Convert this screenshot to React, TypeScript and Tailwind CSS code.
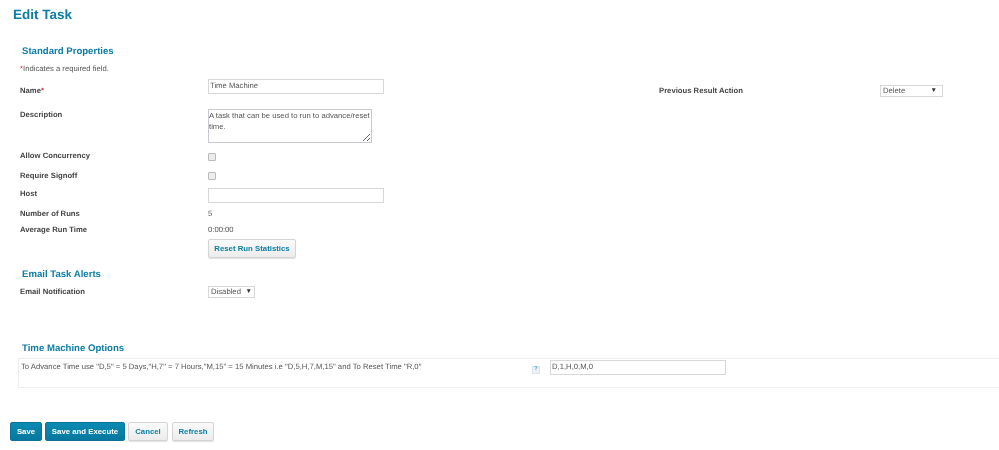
const labelClass = "w-[188px] shrink-0 font-bold text-[#444]";
const headingClass = "ml-[22px] text-[9.6px] leading-[12px] font-bold text-[#0a7ea4]";
const grayButton =
  "h-[19px] rounded-[2px] border border-[#d4d4d4] bg-gradient-to-b from-[#fafafa] to-[#ececec] font-bold text-[#0a7ea4] text-[7.8px] shadow-[0_1px_1px_rgba(0,0,0,0.12)]";
const blueButton =
  "h-[19px] rounded-[2px] border border-[#0a7397] bg-gradient-to-b from-[#0a8bb3] to-[#06789f] font-bold text-white text-[7.8px]";
const checkClass = "h-[8px] w-[8px] appearance-none rounded-[1px] border border-[#bbb] bg-[#ececec]";

function Arrow() {
  return <span className="text-[6.5px] leading-none text-[#333]">▼</span>;
}

export default function App() {
  return (
    <div className="relative h-[450px] w-[999px] overflow-hidden bg-white font-['Liberation_Sans',Arial,sans-serif] text-[7.7px] leading-[10px] text-[#555] [text-rendering:geometricPrecision] [will-change:transform]">
      <h1 className="ml-[13px] pt-[6px] text-[13.5px] leading-[18px] font-bold text-[#0a7ea4]">Edit Task</h1>

      <h2 className={`${headingClass} mt-[22px]`}>Standard Properties</h2>
      <p className="mt-[6px] ml-[20px] text-[#555]">
        <span className="text-[#d9363e]">*</span>Indicates a required field.
      </p>

      <div className="mt-[5px] flex">
        <div className="w-[659px] shrink-0 pl-[20px]">
          <div className="flex h-[30px]">
            <div className={`${labelClass} pt-[7px]`}>
              Name<span className="text-[#d9363e]">*</span>
            </div>
            <div className="h-[15px] w-[176px] border border-[#d8d8d8] pl-[1px] leading-[12px]">Time Machine</div>
          </div>
          <div className="flex h-[41px]">
            <div className={`${labelClass} pt-[1px]`}>Description</div>
            <textarea
              readOnly
              className="h-[34px] w-[164px] resize-y overflow-hidden border border-[#c9c9d6] py-0 pl-0 text-[7.7px] leading-[11px] text-[#555] outline-none"
              value="A task that can be used to run to advance/reset time."
            />
          </div>
          <div className="flex h-[20px] items-start">
            <div className={`${labelClass} pt-[1px]`}>Allow Concurrency</div>
            <input type="checkbox" readOnly className={`${checkClass} mt-[3px]`} />
          </div>
          <div className="flex h-[18px] items-start">
            <div className={`${labelClass} pt-[1px]`}>Require Signoff</div>
            <input type="checkbox" readOnly className={`${checkClass} mt-[2px]`} />
          </div>
          <div className="flex h-[20px]">
            <div className={`${labelClass} pt-[1px]`}>Host</div>
            <div className="h-[15px] w-[176px] border border-[#d8d8d8]" />
          </div>
          <div className="flex h-[16px] pt-[1px]">
            <div className={labelClass}>Number of Runs</div>
            <div>5</div>
          </div>
          <div className="flex h-[15px] pt-[1px]">
            <div className={labelClass}>Average Run Time</div>
            <div>0:00:00</div>
          </div>
          <div className="flex">
            <div className="w-[188px] shrink-0" />
            <button className={`${grayButton} w-[88px]`}>Reset Run Statistics</button>
          </div>
        </div>
        <div className="flex h-[24px] flex-1 pt-[7px]">
          <div className="w-[221px] shrink-0 font-bold text-[#444]">Previous Result Action</div>
          <div className="-mt-[1px] flex h-[12px] w-[63px] items-center justify-between border border-[#d8d8d8] pr-[5px] pl-[2px]">
            Delete
            <Arrow />
          </div>
        </div>
      </div>

      <h2 className={`${headingClass} mt-[11px]`}>Email Task Alerts</h2>
      <div className="mt-[5px] ml-[20px] flex">
        <div className={`${labelClass} pt-[1px]`}>Email Notification</div>
        <div className="flex h-[12px] w-[47px] items-center justify-between border border-[#d8d8d8] pr-[2px] pl-[2px]">
          Disabled
          <Arrow />
        </div>
      </div>

      <h2 className={`${headingClass} mt-[45px]`}>Time Machine Options</h2>
      <div className="mt-[3px] ml-[18px] flex h-[30px] border-y border-l border-[#eeeeee]">
        <div className="w-[513px] shrink-0 pt-[3px] pl-[2px] whitespace-nowrap">
          {'To Advance Time use "D,5" = 5 Days,"H,7" = 7 Hours,"M,15" = 15 Minutes i.e "D,5,H,7,M,15" and To Reset Time "R,0"'}
        </div>
        <div className="mt-[7px] flex h-[8px] w-[8px] shrink-0 items-center justify-center border border-[#dde3ea] bg-[#eef2f6] text-[5.5px] leading-none font-bold text-[#2a9fd0]">
          ?
        </div>
        <div className="mt-[1px] ml-[10px] h-[15px] w-[176px] border border-[#d8d8d8] pl-[1px] leading-[12px]">D,1,H,0,M,0</div>
      </div>

      <div className="mt-[34px] ml-[10px] flex gap-[3px]">
        <button className={`${blueButton} w-[32px]`}>Save</button>
        <button className={`${blueButton} w-[80px]`}>Save and Execute</button>
        <button className={`${grayButton} w-[40px]`}>Cancel</button>
        <button className={`${grayButton} ml-[1px] w-[42px]`}>Refresh</button>
      </div>
    </div>
  );
}
